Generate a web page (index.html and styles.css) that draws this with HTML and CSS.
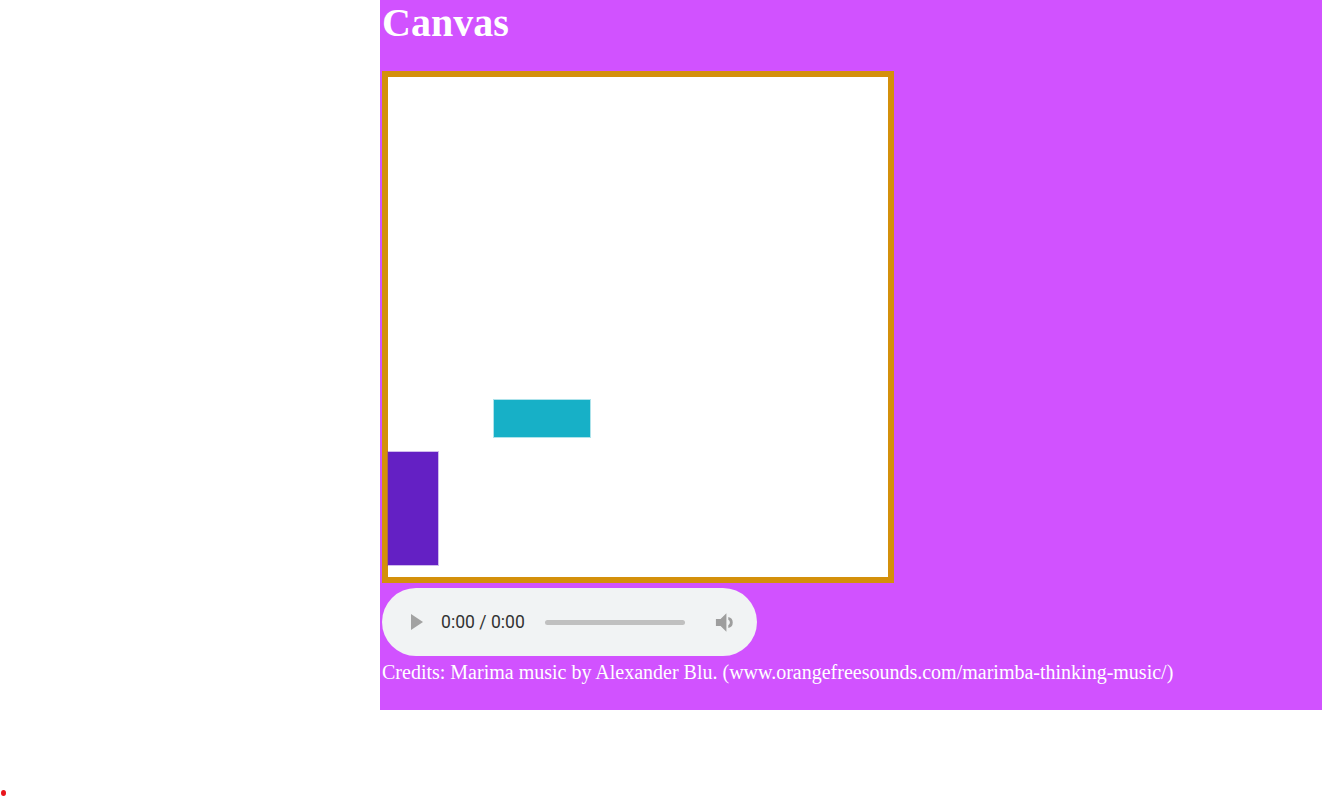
FILE: index.html
```html
<!DOCTYPE html>
<html>
<head>
<meta charset="utf-8">
<link rel="stylesheet" href="styles.css">
</head>
<body>
<div class="page">
  <h1 class="title">Canvas</h1>
  <div class="canvas">
    <div class="rect cyan"></div>
    <div class="rect violet"></div>
  </div>
  <div class="audio">
    <span class="play"></span>
    <span class="time">0:00 / 0:00</span>
    <span class="track"></span>
    <svg class="vol" width="21" height="21" viewBox="3 3 15 18"><path fill="#9e9e9e" d="M4 9v6h4l5 5V4L8 9H4z"/><path fill="#9e9e9e" d="M14.6 7.3v2.4a2.6 2.6 0 0 1 0 4.6v2.4a4.8 4.8 0 0 0 0-9.4z"/></svg>
  </div>
  <p class="credits">Credits: Marima music by Alexander Blu. (www.orangefreesounds.com/marimba-thinking-music/)</p>
</div>
<span class="dot"></span>
</body>
</html>
```
FILE: styles.css
```css
html, body {
  margin: 0;
  padding: 0;
  background: #ffffff;
}
.page {
  margin-left: 380px;
  width: 938px;
  height: 710px;
  padding: 0 2px;
  background: #d152ff;
  font-family: "Liberation Serif", "Times New Roman", serif;
  overflow: hidden;
}
.title {
  margin: 0;
  font-size: 40px;
  line-height: 46px;
  font-weight: bold;
  color: #ffffff;
}
.canvas {
  position: relative;
  margin-top: 25px;
  width: 500px;
  height: 500px;
  border: 6px solid #d4900b;
  background: #ffffff;
}
.rect {
  position: absolute;
}
.cyan {
  left: 106px;
  top: 323px;
  width: 96px;
  height: 37px;
  background: #17b0c7;
  box-shadow: 0 0 0 1px rgba(23, 176, 199, 0.35);
}
.violet {
  left: 0;
  top: 375px;
  width: 50px;
  height: 113px;
  background: #6420c4;
  box-shadow: 0 0 0 1px rgba(100, 32, 196, 0.3);
}
.audio {
  margin-top: 5px;
  width: 375px;
  height: 68px;
  border-radius: 34px;
  background: #f1f3f4;
  display: flex;
  align-items: center;
  font-family: Roboto, "Liberation Sans", sans-serif;
}
.play {
  margin-left: 29px;
  width: 0;
  height: 0;
  border-top: 8px solid transparent;
  border-bottom: 8px solid transparent;
  border-left: 12px solid #a2a2a2;
}
.time {
  margin-left: 18px;
  font-size: 17.6px;
  color: #333333;
}
.track {
  margin-left: 20px;
  width: 140px;
  height: 5px;
  border-radius: 3px;
  background: #c0c0c0;
}
.vol {
  margin-left: 28px;
}
.credits {
  margin: 5px 0 0;
  font-size: 20px;
  line-height: 23px;
  color: #ffffff;
}
.dot {
  position: fixed;
  left: 1px;
  top: 790px;
  width: 5px;
  height: 6px;
  border-radius: 50%;
  background: #e8141b;
}
```
